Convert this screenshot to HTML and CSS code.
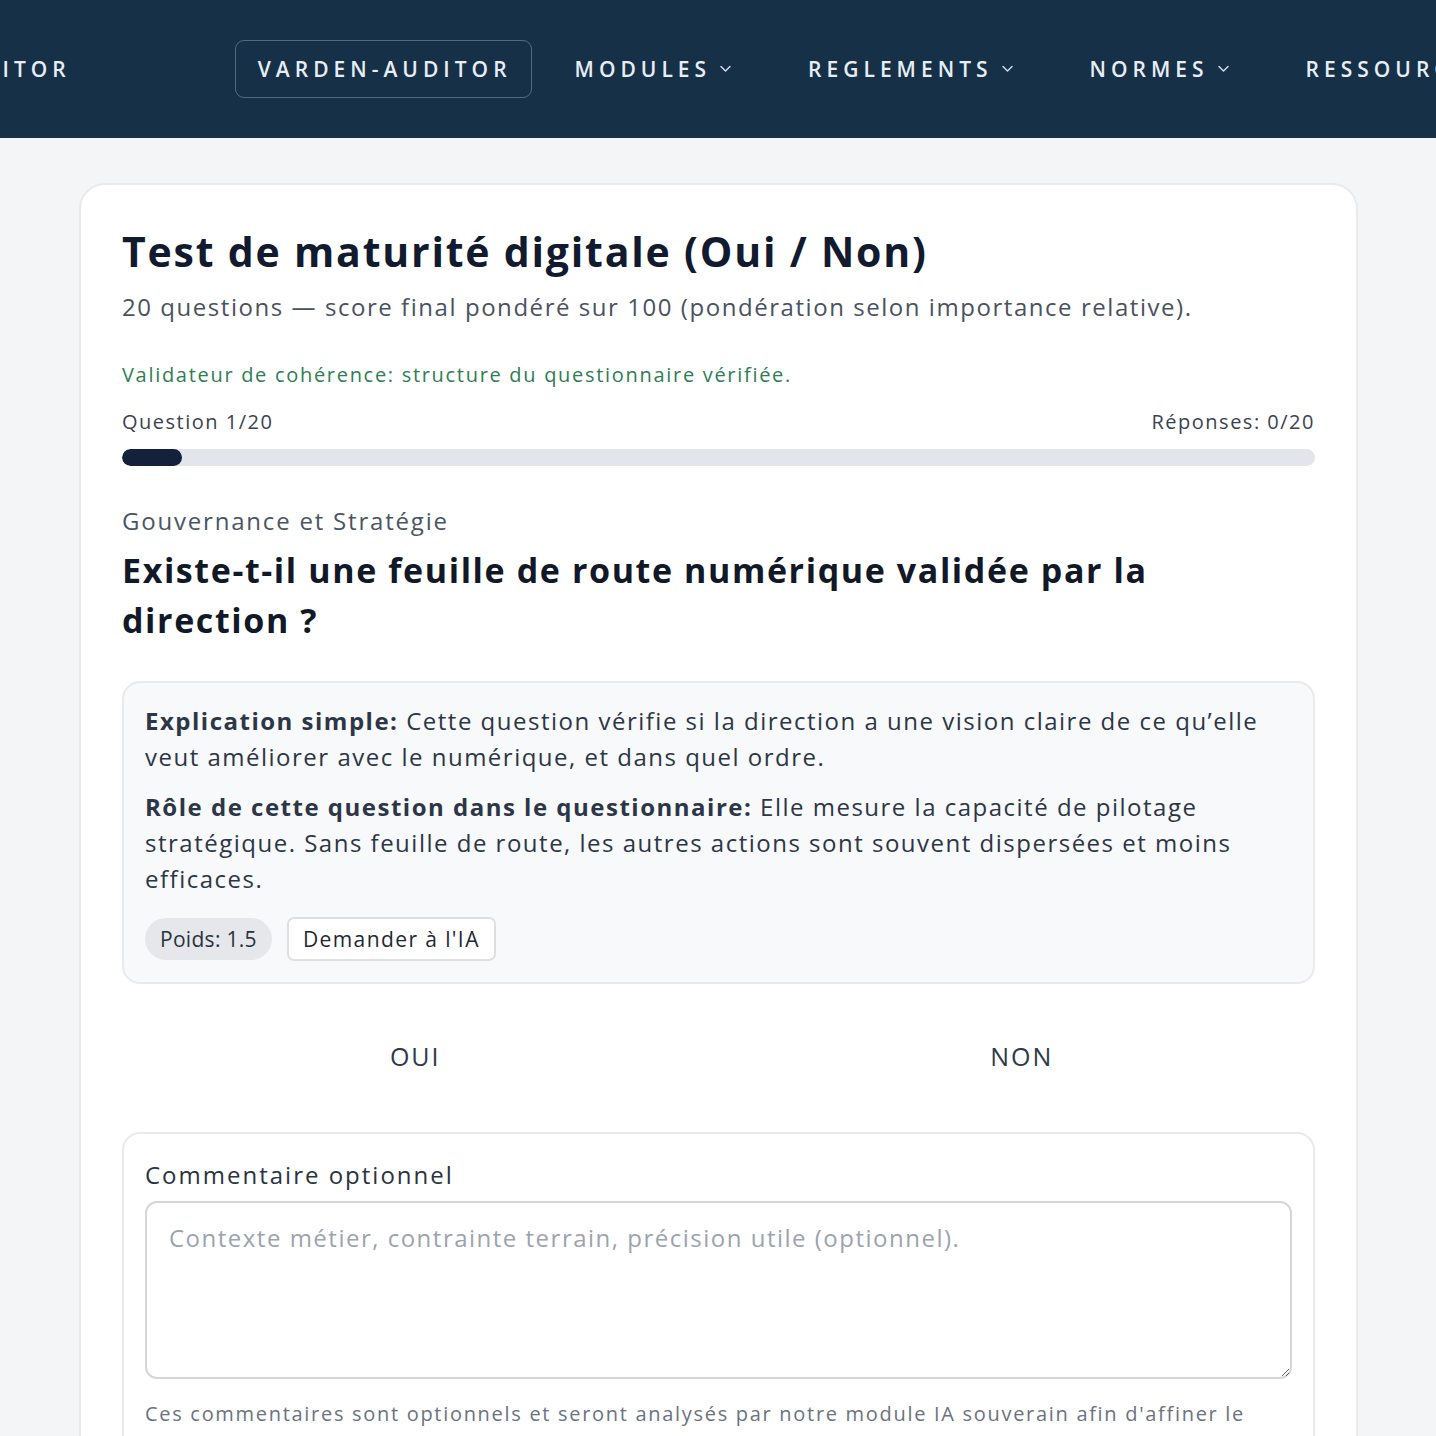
FILE: index.html
```html
<!DOCTYPE html>
<html lang="fr">
<head>
    <meta charset="UTF-8">
    <title>Test de maturité digitale</title>
    <link rel="stylesheet" href="styles.css">
</head>
<body>
    <header class="topbar">
        <nav class="nav-track">
            <span class="brand">VARDEN-AUDITOR</span>
            <a class="nav-link active">VARDEN-AUDITOR</a>
            <a class="nav-link">MODULES <svg class="chev" viewBox="0 0 12 8"><path d="M1.5 1.5 6 6l4.5-4.5"/></svg></a>
            <a class="nav-link">REGLEMENTS <svg class="chev" viewBox="0 0 12 8"><path d="M1.5 1.5 6 6l4.5-4.5"/></svg></a>
            <a class="nav-link">NORMES <svg class="chev" viewBox="0 0 12 8"><path d="M1.5 1.5 6 6l4.5-4.5"/></svg></a>
            <a class="nav-link">RESSOURCES</a>
        </nav>
    </header>

    <main class="page">
        <section class="card">
            <h1>Test de maturité digitale (Oui / Non)</h1>
            <p class="subtitle">20 questions — score final pondéré sur 100 (pondération selon importance relative).</p>
            <p class="validator">Validateur de cohérence: structure du questionnaire vérifiée.</p>

            <div class="progress-head">
                <span>Question 1/20</span>
                <span>Réponses: 0/20</span>
            </div>
            <div class="progress"><div class="progress-fill" style="width:5%"></div></div>

            <p class="category">Gouvernance et Stratégie</p>
            <h2 class="question">Existe-t-il une feuille de route numérique validée par la direction ?</h2>

            <div class="explain">
                <p><strong>Explication simple:</strong> Cette question vérifie si la direction a une vision claire de ce qu’elle veut améliorer avec le numérique, et dans quel ordre.</p>
                <p><strong>Rôle de cette question dans le questionnaire:</strong> Elle mesure la capacité de pilotage stratégique. Sans feuille de route, les autres actions sont souvent dispersées et moins efficaces.</p>
                <div class="explain-actions">
                    <span class="pill">Poids: 1.5</span>
                    <button class="ask-btn">Demander à l'IA</button>
                </div>
            </div>

            <div class="answers">
                <button class="answer">OUI</button>
                <button class="answer">NON</button>
            </div>

            <div class="comment-box">
                <label class="comment-label" for="comment">Commentaire optionnel</label>
                <textarea id="comment" placeholder="Contexte métier, contrainte terrain, précision utile (optionnel)."></textarea>
                <p class="comment-help">Ces commentaires sont optionnels et seront analysés par notre module IA souverain afin d'affiner le rapport.</p>
            </div>
        </section>
    </main>
</body>
</html>
```

FILE: styles.css
```css
:root { --navy: #163048; --ink: #111a2e; --text: #2d3646; --muted: #4b5563; --line: #e9eaec; --green: #2e7d55; }
* { box-sizing: border-box; }
body { margin: 0; font-family: 'Open Sans', 'Noto Sans', sans-serif; background: #f4f5f6; color: var(--text); }

.topbar { background: var(--navy); height: 138px; overflow: hidden; display: flex; align-items: center; }
.nav-track { display: flex; align-items: center; margin-left: -183px; white-space: nowrap; }
.brand, .nav-link { font-size: 21px; font-weight: 600; letter-spacing: 5px; color: #e6eef5; }
.brand { margin-right: 164px; }
.nav-link { display: flex; align-items: center; gap: 8px; padding: 0 17px 0 22px; height: 58px; border: 1.5px solid transparent; border-radius: 9px; margin-right: 35px; }
.nav-link.active { border-color: rgba(255,255,255,0.28); padding-right: 19px; margin-right: 20px; }
.chev { width: 13px; height: 8px; fill: none; stroke: #cfdbe6; stroke-width: 1.5; stroke-linecap: round; stroke-linejoin: round; }

.page { padding: 45px 78px 0 79px; }
.card { background: #fff; border: 2px solid var(--line); border-radius: 26px; padding: 40px 41px 40px; }

h1 { margin: 0; font-size: 41px; font-weight: 700; color: var(--ink); line-height: 1.3; letter-spacing: 1.8px; }
.subtitle { margin: 12px 0 0; font-size: 24px; color: #4a5260; font-weight: 500; letter-spacing: 1.55px; }
.validator { margin: 38px 0 0; font-size: 20px; color: var(--green); font-weight: 500; letter-spacing: 1.7px; }

.progress-head { display: flex; justify-content: space-between; margin-top: 20px; font-size: 20px; color: #3a4250; font-weight: 500; letter-spacing: 1.5px; }
.progress { margin-top: 14px; height: 17px; border-radius: 99px; background: #e2e6ec; overflow: hidden; }
.progress-fill { height: 100%; background: #13213a; border-radius: 99px; }

.category { margin: 38px 0 0; font-size: 24px; color: var(--muted); font-weight: 500; letter-spacing: 1.8px; }
.question { margin: 8px 0 0; font-size: 34px; font-weight: 700; line-height: 50px; color: #111827; letter-spacing: 1.6px; }

.explain { margin-top: 36px; background: #f8f9fa; border: 2px solid var(--line); border-radius: 18px; padding: 20px 21px 21px; }
.explain p { margin: 0 0 14px; font-size: 24px; line-height: 36px; color: var(--text); letter-spacing: 1.5px; }
.explain strong { font-weight: 700; }
.explain-actions { display: flex; align-items: center; gap: 15px; margin-top: 20px; }
.pill { background: #e5e7eb; border-radius: 99px; padding: 0 15px; height: 42px; display: flex; align-items: center; font-size: 21px; font-weight: 500; color: #2b3340; letter-spacing: 0.3px; }
.ask-btn { font-family: inherit; background: #fff; border: 2px solid #dedfe2; border-radius: 7px; height: 44px; padding: 0 14px; font-size: 21px; font-weight: 500; color: #1f2733; letter-spacing: 1.4px; }

.answers { display: grid; grid-template-columns: 1fr 1fr; gap: 20px; margin-top: 44px; }
.answer { font-family: inherit; background: none; border: none; font-size: 25px; font-weight: 500; color: #2f3a48; height: 56px; letter-spacing: 2px; }

.comment-box { margin-top: 48px; border: 2px solid var(--line); border-radius: 18px; padding: 24px 21px 20px; }
.comment-label { display: block; font-size: 24px; font-weight: 500; color: #2b3340; letter-spacing: 2px; }
textarea { display: block; width: 100%; height: 178px; margin-top: 10px; border: 2px solid #d6d6d6; border-radius: 12px; padding: 18px 22px; font-family: 'Open Sans', sans-serif; font-size: 24px; color: #2f3a48; resize: vertical; letter-spacing: 1.5px; }
textarea::placeholder { color: #9ca3af; }
.comment-help { margin: 20px 0 0; font-size: 20px; line-height: 30px; color: #6b7280; font-weight: 500; letter-spacing: 1.7px; }
```
